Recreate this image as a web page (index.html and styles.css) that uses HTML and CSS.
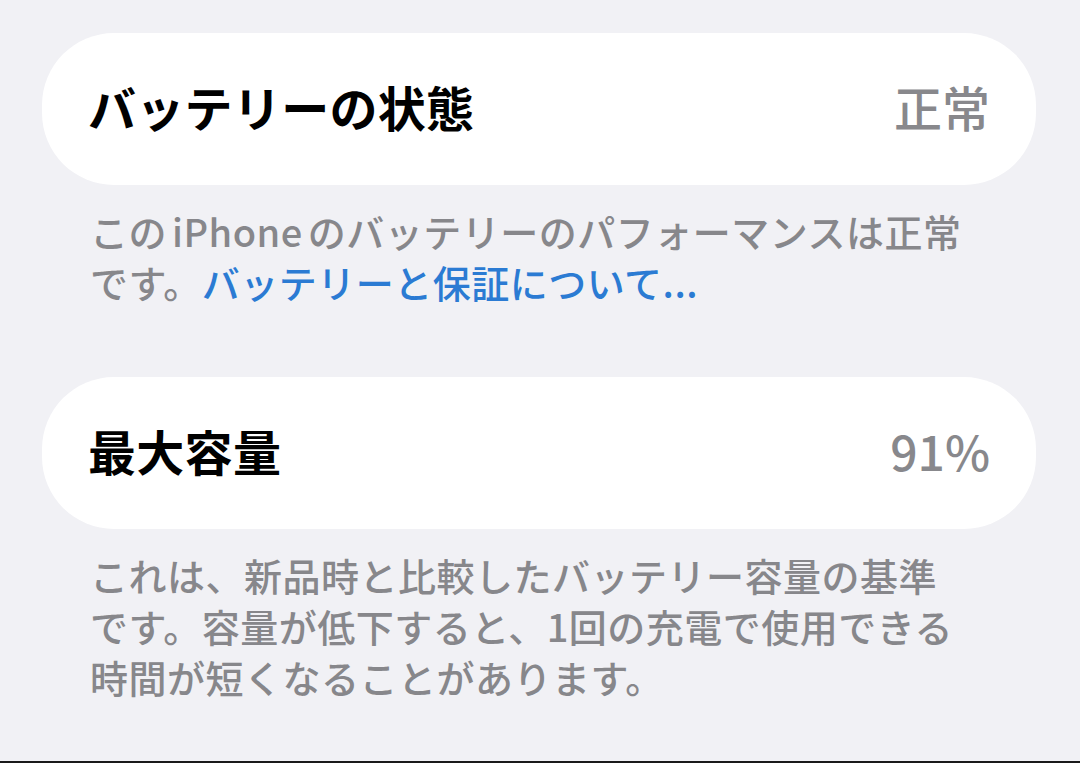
FILE: index.html
```html
<!DOCTYPE html>
<html lang="ja">
<head>
  <meta charset="UTF-8">
  <meta name="viewport" content="width=device-width, initial-scale=1.0">
  <title>バッテリー</title>
  <link rel="stylesheet" href="styles.css">
</head>
<body>
  <main class="settings">
    <section class="group">
      <div class="cell">
        <span class="cell-title">バッテリーの状態</span>
        <span class="cell-value">正常</span>
      </div>
      <p class="group-footer">この<span class="latin">iPhone</span>のバッテリーのパフォーマンスは正常<br>です。<a href="#" class="link">バッテリーと保証について...</a></p>
    </section>

    <section class="group">
      <div class="cell">
        <span class="cell-title">最大容量</span>
        <span class="cell-value">91%</span>
      </div>
      <p class="group-footer">これは、新品時と比較したバッテリー容量の基準<br>です。容量が低下すると、1回の充電で使用できる<br>時間が短くなることがあります。</p>
    </section>
  </main>
  <div class="bottom-edge"></div>
</body>
</html>
```

FILE: styles.css
```css
html, body {
  height: 100%;
}

body {
  margin: 0;
  background-color: #f1f1f5;
  font-family: "Noto Sans CJK JP", "Noto Sans", sans-serif;
  display: flex;
  flex-direction: column;
  overflow: hidden;
}

.settings {
  padding: 33px 44px 0 42px;
  flex: 1;
}

.group {
  margin-bottom: 70px;
}

.group:last-child {
  margin-bottom: 0;
}

.cell {
  display: flex;
  align-items: center;
  justify-content: space-between;
  box-sizing: border-box;
  height: 152px;
  padding: 0 46px 6px;
  background-color: #fff;
  border-radius: 72px;
}

.cell-title {
  font-size: 48px;
  font-weight: 700;
  color: #000;
  letter-spacing: 0.3px;
}

.cell-value {
  font-size: 48px;
  font-weight: 500;
  color: #88888c;
}

.group-footer {
  margin: 20px 0 0 48px;
  font-size: 38px;
  font-weight: 500;
  line-height: 51px;
  letter-spacing: 0.5px;
  color: #87878b;
}

.latin {
  margin: 0 5px;
}

.link {
  color: #2b7bd3;
  text-decoration: none;
}

.bottom-edge {
  height: 2px;
  background-color: #1a1a1a;
}
```
